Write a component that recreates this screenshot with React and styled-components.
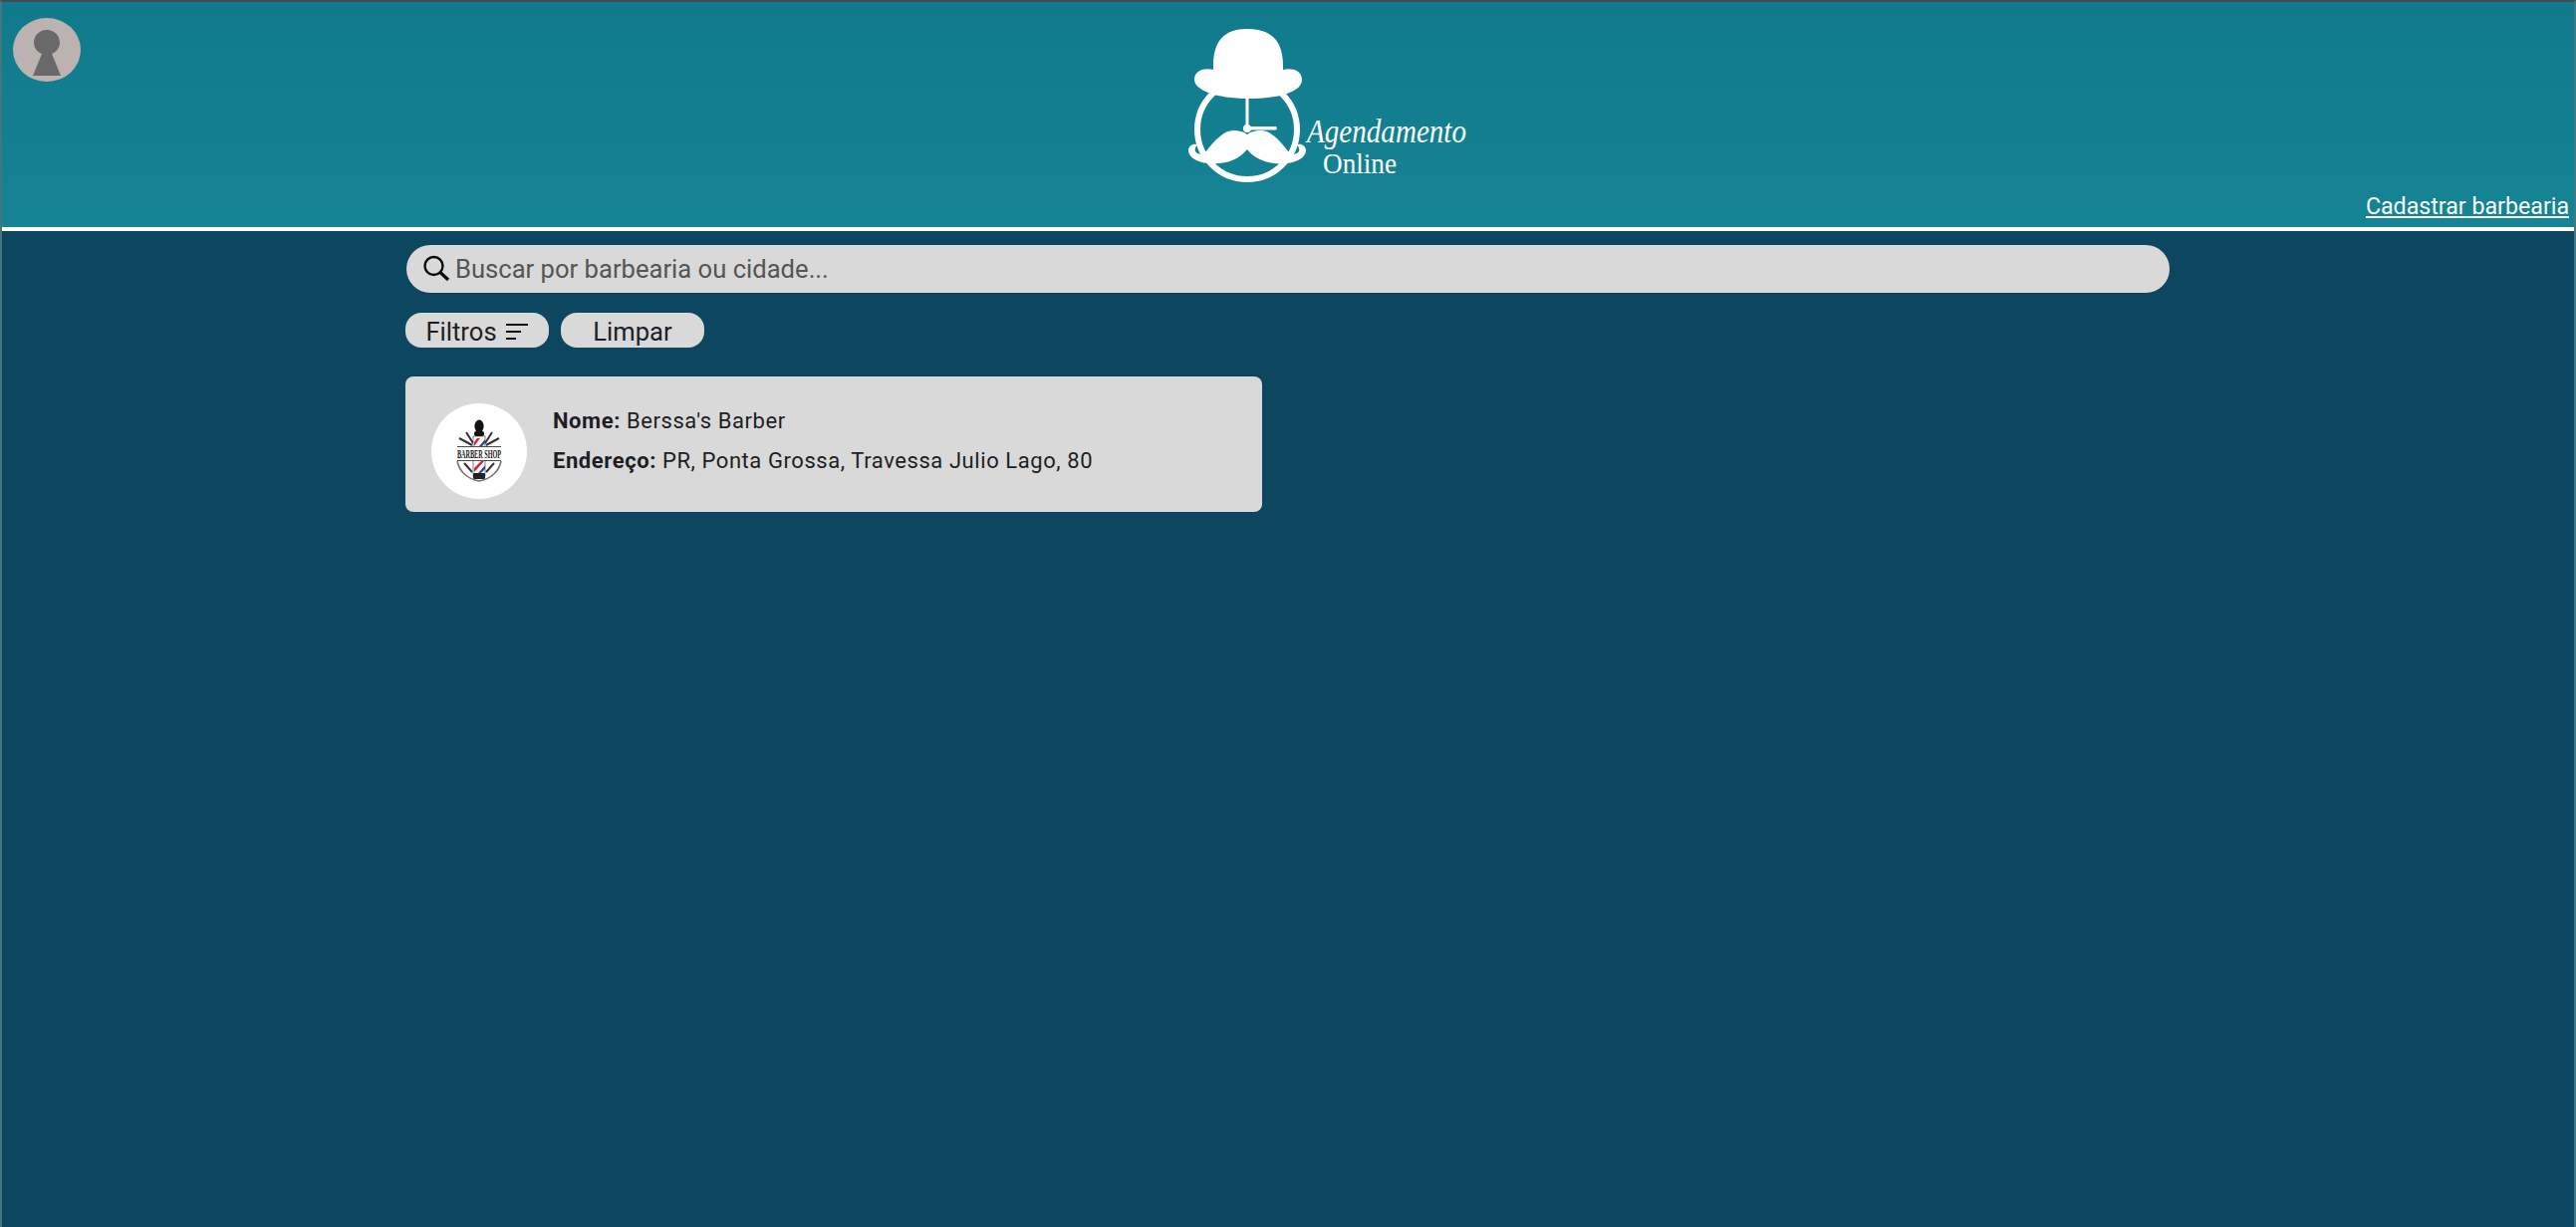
import React from "react";
import styled, { createGlobalStyle } from "styled-components";

const GlobalStyle = createGlobalStyle`
  * { box-sizing: border-box; }
  html, body { margin: 0; padding: 0; height: 100%; }
  body { background: #0c475f; font-family: Roboto, "Liberation Sans", sans-serif; }
`;

const Page = styled.div`
  height: 1232px;
  overflow: hidden;
  background: #0c475f;
  border-left: 2px solid #45757f;
  border-right: 2px solid #45757f;
  border-top: 2px solid #3f4c50;
`;

const Header = styled.header`
  display: grid;
  grid-template-columns: 1fr auto 1fr;
  height: 226px;
  background: linear-gradient(180deg, #107a8c 0%, #158494 100%);
`;

const AvatarSlot = styled.div`
  padding: 16px 0 0 11px;
`;

const Avatar = styled.div`
  width: 68px;
  height: 64px;
  border-radius: 50%;
  background: #bcb2b2;
  display: flex;
  align-items: center;
  justify-content: center;
`;

const LogoSlot = styled.div`
  padding: 8px 0 0 74px;
`;

const LinkSlot = styled.div`
  display: flex;
  align-items: flex-end;
  justify-content: flex-end;
  padding: 0 5px 7px 0;
`;

const RegisterLink = styled.a`
  color: #fff;
  font-size: 23.2px;
  line-height: 27px;
  text-decoration: underline;
`;

const Divider = styled.div`
  height: 4px;
  background: #fff;
`;

const Content = styled.main`
  width: 1771px;
  margin-left: 405px;
  padding-top: 14px;
`;

const SearchBar = styled.div`
  display: flex;
  align-items: center;
  gap: 5px;
  height: 48px;
  margin-left: 1px;
  padding-left: 16px;
  border-radius: 24px;
  background: #d9d9d9;
`;

const SearchText = styled.span`
  color: #555;
  font-size: 25.6px;
`;

const Actions = styled.div`
  display: flex;
  gap: 12px;
  margin-top: 20px;
`;

const Pill = styled.button`
  display: flex;
  align-items: center;
  justify-content: center;
  gap: 8px;
  width: 144px;
  height: 35px;
  padding: 2px 0 0;
  border: 0;
  border-radius: 16px;
  background: #d9d9d9;
  color: #1d1f24;
  font-family: inherit;
  font-size: 25.6px;
  line-height: 30px;
`;

const Card = styled.article`
  display: flex;
  align-items: flex-start;
  gap: 26px;
  width: 860px;
  height: 136px;
  margin-top: 29px;
  padding: 27px 0 0 26px;
  border-radius: 8px;
  background: #d9d9d9;
`;

const Thumb = styled.div`
  flex: none;
  width: 96px;
  height: 96px;
  border-radius: 50%;
  background: #fff;
`;

const Info = styled.div`
  display: flex;
  flex-direction: column;
  gap: 15px;
  margin-top: 5px;
  color: #1d1f24;
  font-size: 22px;
  line-height: 25px;
  letter-spacing: 0.57px;

  b { font-weight: 700; }
`;

const MUSTACHE =
  "M92 125C88 122 84 121 78 121C69 121 60 130 50 143C47 146 42 145 40 142C39 139 41 137 42 135C37 134 33 137 33 141C33 148 42 153 52 154C70 156 84 150 92 140Z";

const LogoMark = () => (
  <svg width="340" height="190" viewBox="0 0 340 190" style={{ display: "block" }}>
    <circle cx="92" cy="120" r="50" fill="none" stroke="#fff" strokeWidth="6" />
    <path
      fill="#fff"
      d="M58 60C57 32 68 19 92 19C118 19 129 32 128 60C136 58 147 60 147 70C147 82 125 89 93 89C60 89 39 80 39 70C39 60 50 58 58 60Z"
    />
    <rect x="90.5" y="88" width="3" height="30" fill="#fff" />
    <rect x="92" y="117" width="30" height="3.5" rx="1.7" fill="#fff" />
    <circle cx="92" cy="119" r="4" fill="#fff" />
    <g fill="#fff">
      <path d={MUSTACHE} />
      <path transform="translate(184 0) scale(-1 1)" d={MUSTACHE} />
    </g>
    <text x="152" y="132.500" fill="#fff" fontFamily="'Liberation Serif', serif" fontStyle="italic" fontSize="33" textLength="160" lengthAdjust="spacingAndGlyphs">Agendamento</text>
    <text x="168" y="164" fill="#fff" fontFamily="'Liberation Serif', serif" fontSize="30" textLength="74" lengthAdjust="spacingAndGlyphs">Online</text>
  </svg>
);

const BarberLogo = () => (
  <svg width="96" height="96" viewBox="0 0 96 96" style={{ display: "block" }}>
    <ellipse cx="48" cy="23" rx="4.600" ry="6.500" fill="#111" />
    <rect x="43" y="28" width="10" height="5" rx="2" fill="#111" />
    <path d="M35 29L42 40M61 29L54 40M28 35L41 42M68 35L55 42" stroke="#333" strokeWidth="2" />
    <rect x="42" y="33" width="12" height="40" fill="#fff" stroke="#333" strokeWidth="0.6" />
    <path d="M43 43V39L46 35H49L43 43Z" fill="#d8232f" />
    <path d="M48 43L54 36V40L51 43Z" fill="#2a4da0" />
    <path d="M43 69V65L50 58H53L43 69Z" fill="#d8232f" />
    <path d="M47 70L54 62V66L50 70Z" fill="#2a4da0" />
    <rect x="42" y="70" width="12" height="6" rx="1" fill="#222" />
    <path d="M26 58C28 68 36 76 48 78C60 76 68 68 70 58" fill="none" stroke="#777" strokeWidth="1.600" />
    <path d="M33 60L41 69M63 60L55 69" stroke="#333" strokeWidth="2" />
    <rect x="26" y="43" width="44" height="14" fill="#fff" />
    <path d="M26 43.500H70M26 57.500H70" stroke="#222" strokeWidth="0.800" />
    <text x="48" y="55" textAnchor="middle" fill="#151515" fontFamily="'Liberation Serif', serif" fontWeight="700" fontSize="12" textLength="44" lengthAdjust="spacingAndGlyphs">BARBER SHOP</text>
  </svg>
);

const KeyholeIcon = () => (
  <svg width="68" height="64" viewBox="0 0 68 64">
    <path fill="#696969" d="M34 12C41.500 12 47 17.500 47 25C47 30 43.500 34.500 39 36L48 58H20L29 36C24.500 34.500 21 30 21 25C21 17.500 26.500 12 34 12Z" />
  </svg>
);

const SearchIcon = () => (
  <svg width="28" height="28" viewBox="0 0 28 28" fill="none" stroke="#0a0a0a">
    <circle cx="11.500" cy="11" r="9" strokeWidth="2.400" />
    <path d="M18 17.500L26 25" strokeWidth="3.200" />
  </svg>
);

const FilterIcon = () => (
  <svg width="24" height="20" viewBox="0 0 24 20" stroke="#111" strokeWidth="2">
    <path d="M1 3H23M1 10H16M1 17H11" />
  </svg>
);

const App = () => (
  <>
    <GlobalStyle />
    <Page>
      <Header>
        <AvatarSlot>
          <Avatar>
            <KeyholeIcon />
          </Avatar>
        </AvatarSlot>
        <LogoSlot>
          <LogoMark />
        </LogoSlot>
        <LinkSlot>
          <RegisterLink href="#">Cadastrar barbearia</RegisterLink>
        </LinkSlot>
      </Header>
      <Divider />
      <Content>
        <SearchBar>
          <SearchIcon />
          <SearchText>Buscar por barbearia ou cidade...</SearchText>
        </SearchBar>
        <Actions>
          <Pill>
            Filtros <FilterIcon />
          </Pill>
          <Pill>Limpar</Pill>
        </Actions>
        <Card>
          <Thumb>
            <BarberLogo />
          </Thumb>
          <Info>
            <span><b>Nome:</b> Berssa's Barber</span>
            <span><b>Endereço:</b> PR, Ponta Grossa, Travessa Julio Lago, 80</span>
          </Info>
        </Card>
      </Content>
    </Page>
  </>
);

export default App;
